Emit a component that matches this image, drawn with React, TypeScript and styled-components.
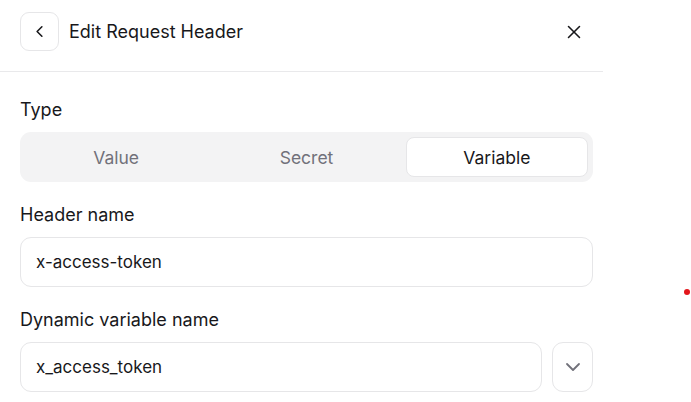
import React from "react";
import styled, { createGlobalStyle } from "styled-components";
import { ChevronDown, ChevronLeft, X } from "lucide-react";

const GlobalStyle = createGlobalStyle`
  body {
    margin: 0;
    background: #fff;
    font-family: Inter, "Noto Sans", sans-serif;
    color: #18181b;
  }
`;

const Page = styled.div`
  position: relative;
  width: 691px;
  height: 402px;
  overflow: hidden;
`;

const Panel = styled.div`
  width: 603px;
  display: flex;
  flex-direction: column;
`;

const Header = styled.div`
  height: 72px;
  box-sizing: border-box;
  display: flex;
  align-items: flex-start;
  padding: 12px 15px 0 20px;
  border-bottom: 1px solid #e9e9eb;
  gap: 10px;
`;

const IconButton = styled.button`
  width: 39px;
  height: 39px;
  display: flex;
  align-items: center;
  justify-content: center;
  padding: 0;
  background: #fff;
  border: 1px solid #e6e6e8;
  border-radius: 9px;
  color: #18181b;
`;

const Title = styled.h1`
  flex: 1;
  margin: 0;
  font-size: 18px;
  font-weight: 400;
  line-height: 39px;
`;

const CloseButton = styled.button`
  display: flex;
  align-items: center;
  justify-content: center;
  width: 28px;
  height: 39px;
  padding: 0;
  border: 0;
  background: none;
  color: #18181b;
`;

const Body = styled.div`
  display: flex;
  flex-direction: column;
  gap: 21px;
  padding: 26px 10px 0 20px;
`;

const Field = styled.div`
  display: flex;
  flex-direction: column;
  gap: 10px;
`;

const Label = styled.label`
  font-size: 18px;
  line-height: 24px;
  font-weight: 400;
  color: #18181b;
`;

const Segmented = styled.div`
  height: 50px;
  box-sizing: border-box;
  display: grid;
  grid-template-columns: repeat(3, 1fr);
  gap: 8px;
  padding: 5px;
  background: #f3f3f4;
  border-radius: 11px;
`;

const Segment = styled.div<{ $active?: boolean }>`
  display: flex;
  align-items: center;
  justify-content: center;
  font-size: 17.5px;
  border-radius: 8px;
  color: ${(p) => (p.$active ? "#18181b" : "#71717a")};
  background: ${(p) => (p.$active ? "#fff" : "transparent")};
  border: 1px solid ${(p) => (p.$active ? "#e6e6e8" : "transparent")};
`;

const Row = styled.div`
  display: flex;
  gap: 10px;
`;

const Input = styled.div`
  flex: 1 1 auto;
  min-width: 0;
  height: 50px;
  box-sizing: border-box;
  display: flex;
  align-items: center;
  padding: 0 16px 0 15px;
  border: 1px solid #e6e6e8;
  border-radius: 11px;
  font-size: 17px;
  color: #18181b;
`;

const SelectButton = styled.button`
  flex: none;
  width: 41px;
  height: 50px;
  display: flex;
  align-items: center;
  justify-content: center;
  padding: 0;
  background: #fff;
  border: 1px solid #e6e6e8;
  border-radius: 11px;
  color: #71717a;
`;

const Dot = styled.span`
  position: absolute;
  left: 684px;
  top: 289px;
  width: 6px;
  height: 6px;
  border-radius: 50%;
  background: #e3161b;
`;

const types = ["Value", "Secret", "Variable"];

export default function App() {
  return (
    <Page>
      <GlobalStyle />
      <Panel>
        <Header>
          <IconButton>
            <ChevronLeft size={19} strokeWidth={2} />
          </IconButton>
          <Title>Edit Request Header</Title>
          <CloseButton>
            <X size={22} strokeWidth={1.7} />
          </CloseButton>
        </Header>
        <Body>
          <Field>
            <Label>Type</Label>
            <Segmented>
              {types.map((t) => (
                <Segment key={t} $active={t === "Variable"}>
                  {t}
                </Segment>
              ))}
            </Segmented>
          </Field>
          <Field>
            <Label>Header name</Label>
            <Input>x-access-token</Input>
          </Field>
          <Field>
            <Label>Dynamic variable name</Label>
            <Row>
              <Input>x_access_token</Input>
              <SelectButton>
                <ChevronDown size={24} strokeWidth={1.8} />
              </SelectButton>
            </Row>
          </Field>
        </Body>
      </Panel>
      <Dot />
    </Page>
  );
}
